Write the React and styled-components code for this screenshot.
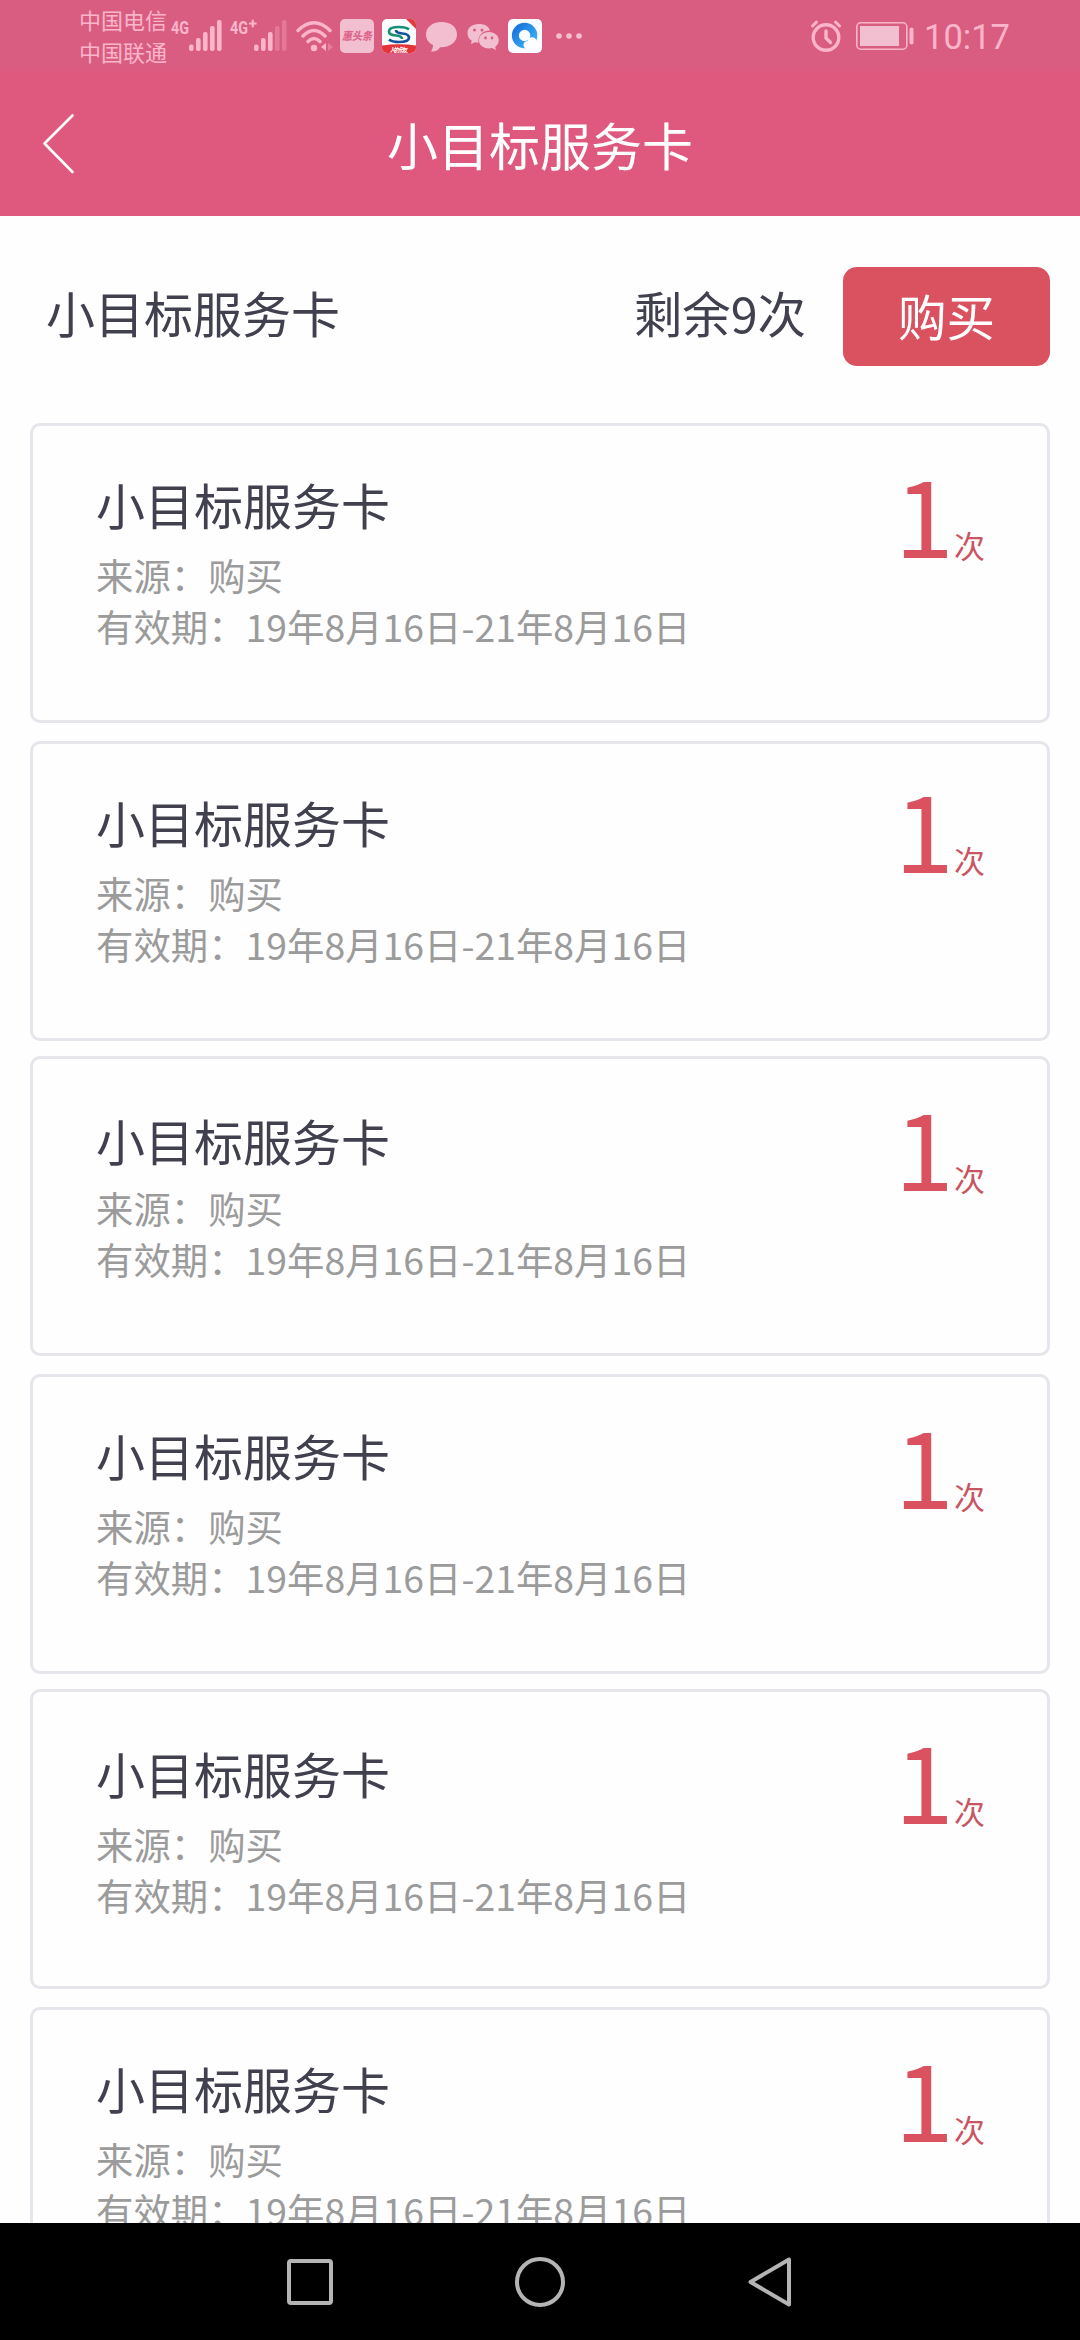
import React from "react";
import styled, { createGlobalStyle } from "styled-components";

const Global = createGlobalStyle`
  * { box-sizing: border-box; }
  body { margin: 0; background: #fefefe; font-family: "Noto Sans CJK SC", sans-serif; }
`;
const Screen = styled.div`
  width: 1080px; height: 2340px; display: flex; flex-direction: column; overflow: hidden;
`;
const StatusBar = styled.div`
  flex: none; height: 72px; display: flex; justify-content: space-between;
  background: linear-gradient(#d95d81 0 66px, #de5a80 72px);
  color: #fbb5cb;
`;
const StatusGroup = styled.div`
  display: flex; align-items: center; padding: ${(p) => p.$pad};
`;
const Carriers = styled.div`
  display: flex; flex-direction: column; width: 90px; font-size: 22px; line-height: 32px;
  padding-bottom: 2px; white-space: nowrap;
`;
const Glyph = styled.svg`
  display: block; flex: none; margin-left: ${(p) => p.$gap || 0}px; overflow: visible;
`;
const Clock = styled.span`
  font-family: Roboto, sans-serif; font-size: 34.5px; line-height: 72px; margin-left: 10px; padding-top: 1px;
`;
const NavBar = styled.header`
  flex: none; height: 144px; display: grid; grid-template-columns: 120px 1fr 120px;
  align-items: center; background: #df597f;
`;
const NavTitle = styled.h1`
  margin: 0; text-align: center; color: #fff; font-size: 51px; font-weight: 400; line-height: 72px;
`;
const Summary = styled.section`
  flex: none; height: 207px; display: flex; align-items: flex-start; padding: 51px 30px 0 46px; color: #40404f;
`;
const SummaryText = styled.span`
  font-size: ${(p) => p.$size}px; line-height: 72px; padding-top: 9px;
  margin-left: ${(p) => p.$push || 0};
`;
const BuyButton = styled.button`
  width: 207px; height: 99px; margin-left: 37px; border: 0; border-radius: 14px; padding: 0 0 3px;
  background: #da515f; color: #fff; font-family: inherit; font-size: 48.6px; line-height: 72px;
`;
const List = styled.main`
  flex: 1; min-height: 0; overflow: hidden; display: flex; flex-direction: column; padding: 0 30px;
`;
const Card = styled.article`
  flex: none; height: 300px; margin-bottom: ${(p) => p.$gap}px; padding: 0 62px 0 63px;
  display: flex; justify-content: space-between; border: 3px solid #e5e5eb; border-radius: 10px;
`;
const CardInfo = styled.div`
  display: flex; flex-direction: column; padding-top: ${(p) => p.$top}px;
`;
const CardTitle = styled.h2`
  margin: 0 0 ${(p) => p.$gap}px; color: #40404f; font-weight: 400; font-size: 49px; line-height: 72px;
`;
const CardLine = styled.p`
  margin: 0; color: #9b9b9b; font-size: 37.4px; line-height: 51px; white-space: nowrap;
`;
const Count = styled.div`
  display: flex; align-items: baseline; height: 110px; color: #da515f; line-height: 110px;
  padding-top: ${(p) => p.$top}px;
`;
const CountNumber = styled.span`font-size: 107px; font-weight: 400;`;
const CountUnit = styled.span`font-size: 31px; color: #c95563;`;
const SystemNav = styled.footer`
  flex: none; height: 117px; display: flex; justify-content: center; align-items: center;
  gap: 182.5px; padding-right: 2px; background: #000;
`;

const cards = [
  { gap: 18, top: 42, mid: 10, count: 31 },
  { gap: 15, top: 42, mid: 10, count: 28 },
  { gap: 18, top: 45, mid: 7, count: 31 },
  { gap: 15, top: 42, mid: 10, count: 31 },
  { gap: 18, top: 45, mid: 10, count: 31 },
  { gap: 0, top: 42, mid: 10, count: 31 },
];

function Signal({ label, plus, full, width, gap }) {
  return (
    <Glyph $gap={gap} width={width} height="40" viewBox={`0 0 ${width} 40`} fill="currentColor">
      <text x="0" y="18.300" fontFamily="Roboto" fontWeight="700" fontSize="19" textLength="18" lengthAdjust="spacingAndGlyphs">{label}</text>
      {plus && <path d="M19 7.500h7.600M22.800 3.700v7.600" stroke="currentColor" strokeWidth="2.200" />}
      {[0, 1, 2, 3, 4].map((i) => (
        <rect key={i} x={width - 33 + i * 7} y={[28.5, 22, 16, 10, 4][i]} width="4.6" height={[6.5, 13, 19, 25, 31][i]} rx="2" opacity={i < full ? 1 : 0.3} />
      ))}
    </Glyph>
  );
}

export default function App() {
  return (
    <Screen>
      <Global />
      <StatusBar>
        <StatusGroup $pad="0 0 0 79px">
          <Carriers><span>中国电信</span><span>中国联通</span></Carriers>
          <Signal label="4G" full={5} width={51} gap={2} />
          <Signal label="4G" plus full={3} width={57} gap={8} />
          <Glyph $gap={8} width="40" height="34" viewBox="0 0 40 34" fill="none" stroke="currentColor" strokeWidth="3.5" strokeLinecap="round">
            <path d="M3 11.5Q19 -4 35 11.5M8 17Q19 6 30 17M13 22.500Q19 16.500 25 22.500" />
            <circle cx="19" cy="29" r="3.200" fill="currentColor" stroke="none" />
            <path d="M31 24v8l-5-4z" fill="currentColor" stroke="none" />
            <path d="M33 24v8l5-4z" fill="currentColor" stroke="none" opacity=".4" />
          </Glyph>
          <Glyph $gap={5} width="34" height="34" viewBox="0 0 34 34">
            <rect width="34" height="34" rx="5" fill="#f2bfd0" />
            <text x="2" y="21" fontSize="11" fontWeight="900" fontStyle="italic" fill="#dc668b" textLength="30" lengthAdjust="spacingAndGlyphs">惠头条</text>
          </Glyph>
          <Glyph $gap={8} width="34" height="34" viewBox="0 0 34 34">
            <clipPath id="bank"><rect width="34" height="34" rx="5" /></clipPath>
            <g clipPath="url(#bank)">
              <rect width="34" height="34" fill="#fbfdff" />
              <path d="M24 0h10v10z" fill="#e23c43" />
              <path d="M0 26.500Q17 24 34 26.500V34H0z" fill="#e63239" />
              <g fill="none" strokeWidth="2.700">
                <path d="M27 10.500Q24 8 17 8Q7 8 7 12.500Q7 16 14 16.500Q20 17 20 20" stroke="#168f75" />
                <path d="M7 20.500Q10 23 17 23Q27 23 27 18.500Q27 15 20 14.500Q14 14 14 11" stroke="#15529b" />
              </g>
              <text x="8" y="32.500" fontSize="6" fontWeight="700" fill="#fff" textLength="18">人的卡友</text>
            </g>
          </Glyph>
          <Glyph $gap={9} width="34" height="32" viewBox="0 0 34 32" fill="#f2bfd0">
            <path d="M16.500 2C7 2 1 7.500 1 14.500c0 5 3 8.500 7 10.500 0 3-1 4.500-2 6.500 4 .5 7-1 9-4.300C25.500 27.500 32 22 32 14.500S26 2 16.500 2Z" />
          </Glyph>
          <Glyph $gap={8} width="34" height="30" viewBox="0 0 34 30" fill="#f2bfd0">
            <path d="M12 3C5 3 .5 6.500 .5 12c0 3.500 1.500 6 4.300 7.800L4 23l4-1.800 3.500.6C10.500 14 16 9.500 23 9.500 21.500 5 17.500 3 12 3Z" />
            <path d="M22 11c-6 0-10 3.600-10 8.300S16 27.500 22 27.500l3-.4 4 2-.8-3.200c2.200-1.700 3.500-4 3.500-6.600 0-4.700-4-8.300-9.700-8.300Z" />
            <g fill="#d95d81"><circle cx="7.500" cy="9" r="1.500" /><circle cx="15" cy="9" r="1.500" /><circle cx="18.500" cy="17" r="1.400" /><circle cx="25" cy="17" r="1.400" /></g>
          </Glyph>
          <Glyph $gap={7} width="34" height="34" viewBox="0 0 34 34">
            <linearGradient id="ring" x1="0" y1="0" x2="1" y2="1">
              <stop offset="0" stopColor="#1672de" /><stop offset="1" stopColor="#3fb4f6" />
            </linearGradient>
            <rect width="34" height="34" rx="5" fill="#f8fbff" />
            <circle cx="16.600" cy="16.500" r="9.200" fill="none" stroke="url(#ring)" strokeWidth="7" />
            <path d="M20 30q-4.500-.5-4.500-4t4-4q1.500-5 6-3.500 3 1 3 4 4.500 1 3 4.500-1.500 3-11.500 3Z" fill="#fff" />
          </Glyph>
          <Glyph $gap={14} width="26" height="6" viewBox="0 0 26 6" fill="#f2bfd0">
            <circle cx="3" cy="3" r="2.800" /><circle cx="13" cy="3" r="2.800" /><circle cx="23" cy="3" r="2.800" />
          </Glyph>
        </StatusGroup>
        <StatusGroup $pad="0 70px 0 0">
          <Glyph width="32" height="32" viewBox="0 0 32 32" fill="none" stroke="currentColor" strokeWidth="3.400" strokeLinecap="round">
            <circle cx="16" cy="17.500" r="12.800" />
            <path d="M16 11v7l4.500 4.500" />
            <path d="M2.500 6l4-4M25.500 2l4 4" strokeWidth="3" />
          </Glyph>
          <Glyph $gap={14} width="58" height="28" viewBox="0 0 58 28">
            <rect x="0.800" y="0.800" width="50" height="26.400" rx="4" fill="none" stroke="currentColor" strokeWidth="1.600" />
            <rect x="4" y="4" width="39" height="20" fill="#f2bfd0" />
            <rect x="53.500" y="5.500" width="4" height="17" rx="2" fill="currentColor" />
          </Glyph>
          <Clock>10:17</Clock>
        </StatusGroup>
      </StatusBar>
      <NavBar>
        <Glyph $gap={42} width="32" height="60" viewBox="0 0 32 60" fill="none" stroke="#fff" strokeWidth="2.600" strokeLinecap="round" strokeLinejoin="round">
          <path d="M30.500 1.500L2.500 29.500L30.500 58" />
        </Glyph>
        <NavTitle>小目标服务卡</NavTitle>
      </NavBar>
      <Summary>
        <SummaryText $size={49}>小目标服务卡</SummaryText>
        <SummaryText $size={48.4} $push="auto">剩余9次</SummaryText>
        <BuyButton>购买</BuyButton>
      </Summary>
      <List>
        {cards.map((c, i) => (
          <Card key={i} $gap={c.gap}>
            <CardInfo $top={c.top}>
              <CardTitle $gap={c.mid}>小目标服务卡</CardTitle>
              <CardLine>来源：购买</CardLine>
              <CardLine>有效期：19年8月16日-21年8月16日</CardLine>
            </CardInfo>
            <Count $top={c.count}><CountNumber>1</CountNumber><CountUnit>次</CountUnit></Count>
          </Card>
        ))}
      </List>
      <SystemNav>
        <Glyph width="46" height="46" viewBox="0 0 46 46" fill="none" stroke="#b4b4b4" strokeWidth="4"><rect x="2" y="2" width="42" height="42" rx="2" /></Glyph>
        <Glyph width="50" height="50" viewBox="0 0 50 50" fill="none" stroke="#b4b4b4" strokeWidth="4"><circle cx="25" cy="25" r="23" /></Glyph>
        <Glyph width="44" height="50" viewBox="0 0 44 50" fill="none" stroke="#b4b4b4" strokeWidth="4" strokeLinejoin="round"><path d="M41 2.500V47.500L2.500 25Z" /></Glyph>
      </SystemNav>
    </Screen>
  );
}
